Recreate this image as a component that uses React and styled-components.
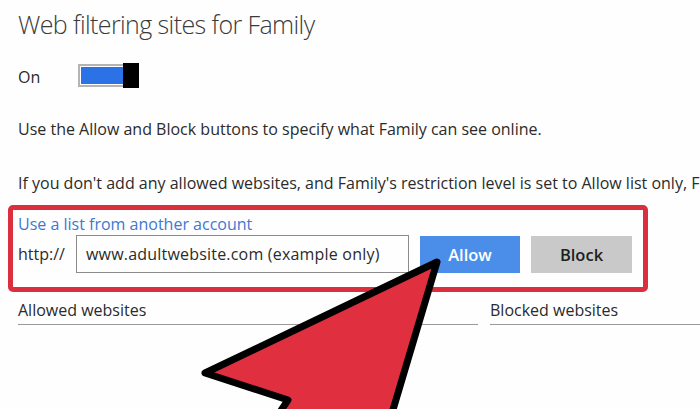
import React from "react";
import styled, { createGlobalStyle } from "styled-components";

const Global = createGlobalStyle`
  html, body { margin: 0; padding: 0; background: #fff; }
  body { font-family: "Open Sans", "Noto Sans", sans-serif; color: #2b2b2b; }
`;

const Page = styled.div`
  position: relative;
  width: 700px;
  height: 409px;
  overflow: hidden;
  padding-left: 18px;
  box-sizing: border-box;
  background: #fefefe;
`;

const Title = styled.h1`
  margin: 7px 0 0;
  font-size: 25px;
  line-height: 34px;
  font-weight: 300;
  letter-spacing: -0.6px;
  color: #3a3a3a;
  white-space: nowrap;
`;

const ToggleRow = styled.div`
  display: flex;
  align-items: center;
  height: 25px;
  margin-top: 22px;
  font-size: 16px;
`;

const ToggleLabel = styled.span`
  width: 60px;
  line-height: 22px;
  padding-top: 2px;
`;

const Toggle = styled.div`
  display: flex;
  align-items: center;
`;

const Track = styled.div`
  width: 45px;
  height: 23px;
  box-sizing: border-box;
  border: 2px solid #b4b4b4;
  border-right: none;
  padding: 1px 0 1px 1px;
  background: #fff;
  display: flex;
`;

const Fill = styled.div`
  flex: 1;
  background: #2b72e6;
`;

const Thumb = styled.div`
  width: 16px;
  height: 25px;
  background: #000;
`;

const Para = styled.p`
  margin: ${(p) => p.$top}px 0 0;
  font-size: 16px;
  line-height: 22px;
  white-space: nowrap;
`;

const AddBox = styled.div`
  margin: 11px 0 0 -10px;
  width: 640px;
  box-sizing: border-box;
  border: 5px solid #dc2f3e;
  border-radius: 5px;
  padding: 3px 6px 14px 5px;
`;

const Link = styled.a`
  display: block;
  font-size: 16px;
  line-height: 22px;
  color: #3d78d2;
  text-decoration: none;
`;

const InputRow = styled.div`
  display: flex;
  align-items: center;
  gap: 11px;
`;

const Prefix = styled.span`
  font-size: 16px;
  width: 47px;
`;

const UrlField = styled.div`
  width: 333px;
  height: 38px;
  box-sizing: border-box;
  border: 1px solid #8c8c8c;
  padding-left: 9px;
  display: flex;
  align-items: center;
  font-size: 16px;
  color: #2b2b2b;
  letter-spacing: 0.2px;
  white-space: nowrap;
`;

const Button = styled.button`
  width: ${(p) => p.$w}px;
  height: 37px;
  border: none;
  background: ${(p) => (p.$primary ? "#4a8ee9" : "#c9c9c9")};
  color: ${(p) => (p.$primary ? "#fff" : "#1e1e1e")};
  font-family: "Open Sans", "Noto Sans", sans-serif;
  font-size: 16.5px;
  font-weight: 600;
  padding: 0;
`;

const Columns = styled.div`
  display: flex;
  gap: 12px;
  margin-top: 7px;
`;

const ColumnHead = styled.div`
  flex: ${(p) => (p.$w ? `0 0 ${p.$w}px` : "1")};
  font-size: 16px;
  line-height: 22px;
  padding-bottom: 3px;
  border-bottom: 1px solid #9a9a9a;
  white-space: nowrap;
`;

const ArrowLayer = styled.svg`
  position: absolute;
  left: 0;
  top: 0;
  pointer-events: none;
`;

export default function App() {
  return (
    <>
      <Global />
      <Page>
        <Title>Web filtering sites for Family</Title>
        <ToggleRow>
          <ToggleLabel>On</ToggleLabel>
          <Toggle>
            <Track>
              <Fill />
            </Track>
            <Thumb />
          </Toggle>
        </ToggleRow>
        <Para $top={30}>
          Use the Allow and Block buttons to specify what Family can see online.
        </Para>
        <Para $top={32}>
          If you don't add any allowed websites, and Family's restriction level is set to Allow list only, Family won't be able to see any websites.
        </Para>
        <AddBox>
          <Link href="#">Use a list from another account</Link>
          <InputRow>
            <Prefix>http://</Prefix>
            <UrlField>www.adultwebsite.com (example only)</UrlField>
            <Button $primary $w={100}>Allow</Button>
            <Button $w={101}>Block</Button>
          </InputRow>
        </AddBox>
        <Columns>
          <ColumnHead $w={460}>Allowed websites</ColumnHead>
          <ColumnHead>Blocked websites</ColumnHead>
        </Columns>
        <ArrowLayer width="700" height="409" viewBox="0 0 700 409">
          <polygon
            points="437,262 205,373 288,400 268,430 384,440"
            fill="#e0303f"
            stroke="#000"
            strokeWidth="7"
            strokeLinejoin="round"
          />
        </ArrowLayer>
      </Page>
    </>
  );
}
